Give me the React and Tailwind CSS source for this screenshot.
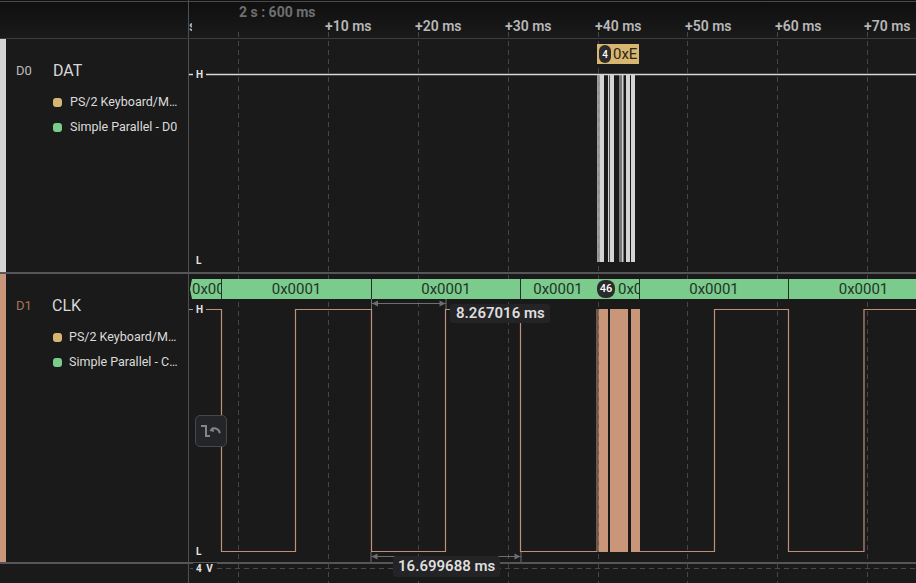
const gridXs = [238.5, 328.5, 418.5, 508.5, 598.5, 687.5, 777.5, 867.5];
const timeLabels = [
  ["+10 ms", 325],
  ["+20 ms", 415],
  ["+30 ms", 505],
  ["+40 ms", 595],
  ["+50 ms", 685],
  ["+60 ms", 775],
  ["+70 ms", 864],
];
const datBars = [
  [597.3, 1.3],
  [599.3, 4.7],
  [608, 1.3],
  [610, 4],
  [619.5, 1],
  [621.5, 2],
  [626, 4],
  [631, 4],
];
const clkBursts = [
  [596.5, 1],
  [598.5, 9.5],
  [610, 18],
  [631, 9],
];
const segments = [
  [222, 371, "0x0001"],
  [372, 520, "0x0001"],
  [521, 595, "0x0001"],
  [640, 788, "0x0001"],
  [789, 938, "0x0001"],
];

function Legend({ color, label, left }) {
  return (
    <div className="flex items-center h-[25px]">
      <span className={`w-[9px] h-[9px] rounded-[3px] ${color}`} />
      <span className={`${left} w-[111px] truncate text-[12.5px] text-[#dcdcdc]`}>{label}</span>
    </div>
  );
}

function Sidebar({ bar, id, idColor, name, nameGap, nameTop, legends, legendLeft }) {
  return (
    <div className="w-[189px] shrink-0 flex border-r border-[#4f4f52]">
      <div className={`w-[6px] ${bar}`} />
      <div className={`pl-[10px] ${nameTop}`}>
        <div className="flex items-center h-[20px]">
          <span className={`text-[13px] ${idColor}`} style={{ width: nameGap }}>{id}</span>
          <span className="text-[16px] text-[#d8d8d8]">{name}</span>
        </div>
        <div className="mt-[9px] ml-[37px]">
          {legends.map((l) => (
            <Legend key={l.label} color={l.color} label={l.label} left={legendLeft} />
          ))}
        </div>
      </div>
    </div>
  );
}

function Level({ children, className }) {
  return (
    <span className={`absolute z-20 text-[10px] leading-[12px] font-bold text-[#e4e4e4] bg-[#1a1a1a] px-[3px] ${className}`}>
      {children}
    </span>
  );
}

export default function App() {
  return (
    <div
      className="relative w-[916px] h-[583px] overflow-hidden bg-[#1a1a1a] flex flex-col"
      style={{ fontFamily: "Roboto, sans-serif" }}
    >
      {/* header */}
      <div className="h-[39px] shrink-0 flex border-b border-[#3c3c40] bg-gradient-to-b from-[#0f0f0f] to-[#1a1a1a]">
        <div className="w-[189px] border-r border-[#4f4f52]" />
      </div>
      <div className="absolute top-[1px] left-0 right-0 h-[1px] bg-[#4a4a4a]" />

      {/* D0 */}
      <div className="h-[233px] shrink-0 flex">
        <Sidebar
          bar="bg-[#d4d4d4]"
          id="D0"
          idColor="text-[#bdbdbd]"
          name="DAT"
          nameGap={37}
          nameTop="pt-[22px]"
          legendLeft="ml-[8px]"
          legends={[
            { color: "bg-[#d6b671]", label: "PS/2 Keyboard/Mouse" },
            { color: "bg-[#7bcb8d]", label: "Simple Parallel - D0" },
          ]}
        />
        <div className="flex-1" />
      </div>
      <div className="h-[2px] shrink-0 bg-[#565658]" />

      {/* D1 */}
      <div className="h-[288px] shrink-0 flex">
        <Sidebar
          bar="bg-[#c99679]"
          id="D1"
          idColor="text-[#a8735a]"
          name="CLK"
          nameGap={36}
          nameTop="pt-[22px]"
          legendLeft="ml-[7px]"
          legends={[
            { color: "bg-[#d6b671]", label: "PS/2 Keyboard/Mouse" },
            { color: "bg-[#7bcb8d]", label: "Simple Parallel - CLK" },
          ]}
        />
        <div className="flex-1" />
      </div>
      <div className="h-[2px] shrink-0 bg-[#565658]" />

      {/* analog */}
      <div className="flex-1 flex">
        <div className="w-[189px] border-r border-[#4f4f52]" />
      </div>

      {/* signal drawing */}
      <svg className="absolute left-0 top-0 z-10" width="916" height="583" fill="none">
        {gridXs.map((x) => (
          <line key={x} x1={x} x2={x} y1="32" y2="583" stroke="#46464a" strokeDasharray="5 4" />
        ))}
        <line x1="190" x2="916" y1="568.5" stroke="#4a4a4c" strokeDasharray="5 4" y2="568.5" />
        <line x1="189" x2="916" y1="74.5" y2="74.5" stroke="#d8d8d8" strokeWidth="1.4" />
        {datBars.map(([x, w]) => (
          <rect key={x} x={x} y="74" width={w} height="188" fill="#d4d4d4" />
        ))}
        <path
          d="M189 309.5H221.5V551.5H295.5V309.5H371.5V551.5H445.5V309.5H520.5V551.5H597M640 551.5H714.5V309.5H788.5V551.5H864V309.5H916"
          stroke="#c09078"
          strokeWidth="1.2"
        />
        {clkBursts.map(([x, w]) => (
          <rect key={x} x={x} y="309" width={w} height="243" fill="#c99679" />
        ))}
        <g stroke="#6e6e6e" fill="#6e6e6e">
          <path d="M371.5 299V309M446 299V309M371.5 303.5H446" fill="none" />
          <path d="M372 303.5l6 -3v6zM445.5 303.5l-6 -3v6z" stroke="none" />
          <path d="M371 552V562M521 552V562M371 556.5H521" fill="none" />
          <path d="M371.5 556.5l6 -3v6zM520.5 556.5l-6 -3v6z" stroke="none" />
        </g>
      </svg>

      {/* time ruler */}
      <span className="absolute z-20 left-[239px] top-[4px] text-[14px] leading-[16px] font-bold text-[#6f6f6f]">2 s : 600 ms</span>
      <span className="absolute z-20 left-[189px] top-[18px] w-[3px] overflow-hidden text-[14px] leading-[16px] font-semibold text-[#b8b8b8]">s</span>
      {timeLabels.map(([t, x]) => (
        <span
          key={t}
          className="absolute z-20 top-[18px] text-[14px] leading-[16px] font-semibold text-[#b8b8b8]"
          style={{ left: x }}
        >
          {t}
        </span>
      ))}

      {/* levels */}
      <Level className="left-[193px] top-[68px] !leading-[13px]">H</Level>
      <Level className="left-[193px] top-[255px]">L</Level>
      <Level className="left-[193px] top-[304px]">H</Level>
      <Level className="left-[193px] top-[546px]">L</Level>
      <Level className="left-[193px] top-[563px] tracking-[1px]">4 V</Level>

      {/* DAT annotation */}
      <div className="absolute z-20 left-[597px] top-[44px] w-[42px] h-[20px] bg-[#d6b671] flex items-center pl-[2px] text-[15px] text-[#2a2414]">
        <span className="w-[12px] h-[18px] rounded-full bg-[#2b2b2d] text-white text-[10px] font-medium flex items-center justify-center">4</span>
        <span className="ml-[2px]">0xE</span>
      </div>

      {/* CLK annotation band */}
      <div className="absolute z-20 left-[190px] top-[279px] right-0 h-[20px] bg-[#7bcb8d] text-[15px] leading-[20px] text-[#1f3527] overflow-hidden [clip-path:polygon(2px_0,100%_0,100%_100%,2px_100%,0_50%)]">
        <span className="absolute left-0 top-0 w-[31px] h-full overflow-hidden pl-[2px]">0x0001</span>
        {[221, 371, 520, 639, 788].map((x) => (
          <span key={x} className="absolute top-0 w-[1px] h-full bg-[#1f3527]" style={{ left: x - 190 }} />
        ))}
        {segments.map(([a, b, t]) => (
          <span
            key={a}
            className="absolute top-0 text-center"
            style={{ left: a - 190, width: b - a }}
          >
            {t}
          </span>
        ))}
        <span className="absolute left-[428px] top-0 w-[21px] overflow-hidden">0x0001</span>
        <span className="absolute left-[407px] top-[1px] w-[18px] h-[18px] rounded-[8px] bg-[#2b2b2d] text-white text-[11px] font-medium leading-[18px] text-center">46</span>
      </div>

      {/* measurements */}
      <div className="absolute z-20 left-[450px] top-[304px] w-[100px] h-[19px] pl-[6px] rounded-[3px] bg-[#242426] text-[15px] leading-[19px] font-semibold text-[#dedede]">8.267016 ms</div>
      <div className="absolute z-20 left-[393px] top-[556px] w-[107px] h-[21px] pl-[5px] rounded-[3px] bg-[#242426] text-[15px] leading-[21px] font-semibold text-[#dedede]">16.699688 ms</div>

      {/* restore button */}
      <button className="absolute z-20 left-[195px] top-[415px] w-[32px] h-[32px] rounded-[5px] border border-[#47474a] bg-[#242528] flex items-center justify-center">
        <svg width="22" height="16" viewBox="0 0 22 16" fill="none" stroke="#858585" strokeWidth="2">
          <path d="M1 3H6V13H10" />
          <path d="M19.7 10.3C19.5 6 15 4 11 6.5" />
          <path d="M9.3 7.7L13 4.2L14 9Z" fill="#858585" stroke="none" />
        </svg>
      </button>
    </div>
  );
}
